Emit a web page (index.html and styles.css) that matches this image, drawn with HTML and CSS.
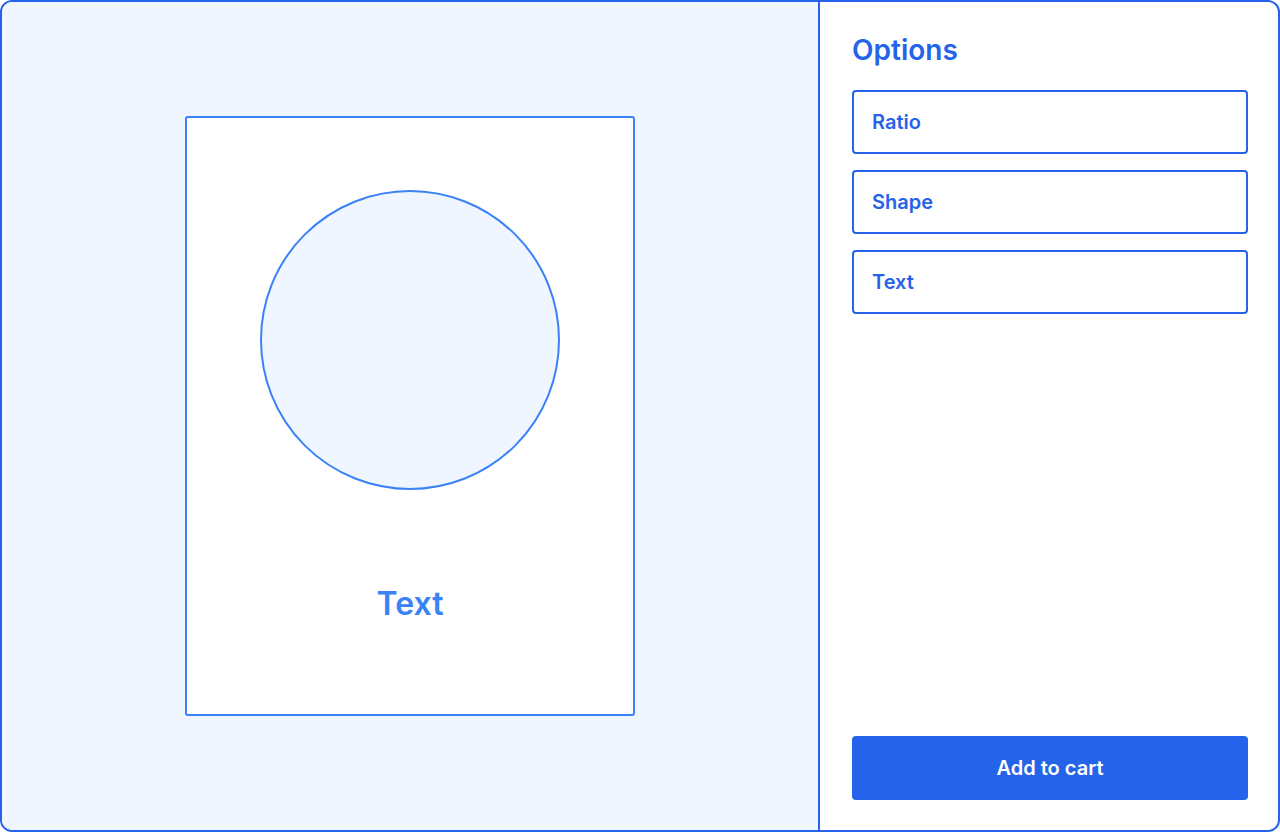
FILE: index.html
```html
<!DOCTYPE html>
<html lang="en">
<head>
<meta charset="utf-8">
<title>Product customizer</title>
<link rel="stylesheet" href="styles.css">
</head>
<body>
<div class="app">
  <section class="preview">
    <div class="card">
      <div class="circle"></div>
      <div class="card-text">Text</div>
    </div>
  </section>
  <aside class="options">
    <h1 class="title">Options</h1>
    <div class="option-list">
      <div class="option">Ratio</div>
      <div class="option">Shape</div>
      <div class="option">Text</div>
    </div>
    <button class="cart">Add to cart</button>
  </aside>
</div>
</body>
</html>
```
FILE: styles.css
```css
* { box-sizing: border-box; }
html, body { margin: 0; padding: 0; }
body {
  width: 1280px;
  height: 832px;
  font-family: Inter, "Noto Sans", sans-serif;
  background: #ffffff;
}
.app {
  width: 1280px;
  height: 832px;
  border: 2px solid #2563eb;
  border-radius: 12px;
  overflow: hidden;
  display: flex;
}
.preview {
  flex: 1;
  background: #eff6ff;
  display: flex;
  align-items: center;
  justify-content: center;
}
.card {
  width: 450px;
  height: 600px;
  background: #ffffff;
  border: 2px solid #3b82f6;
  border-radius: 3px;
  display: flex;
  flex-direction: column;
  align-items: center;
  padding-top: 72px;
}
.circle {
  width: 300px;
  height: 300px;
  border-radius: 50%;
  border: 2px solid #3b82f6;
  background: #eff6ff;
  flex: none;
}
.card-text {
  flex: 1;
  display: flex;
  align-items: center;
  justify-content: center;
  padding-top: 2px;
  font-size: 32px;
  font-weight: 600;
  color: #3b82f6;
}
.options {
  width: 460px;
  border-left: 2px solid #2563eb;
  padding: 32px 30px 30px 32px;
  display: flex;
  flex-direction: column;
}
.title {
  margin: 0 0 24px;
  font-size: 28px;
  line-height: 32px;
  font-weight: 600;
  color: #2563eb;
}
.option-list {
  display: flex;
  flex-direction: column;
  gap: 16px;
}
.option {
  height: 64px;
  border: 2px solid #2563eb;
  border-radius: 4px;
  padding: 0 18px;
  display: flex;
  align-items: center;
  font-size: 20px;
  font-weight: 600;
  color: #2563eb;
}
.cart {
  margin-top: auto;
  height: 64px;
  border: none;
  border-radius: 4px;
  background: #2563eb;
  color: #ffffff;
  font-family: inherit;
  font-size: 20px;
  font-weight: 600;
}
```
